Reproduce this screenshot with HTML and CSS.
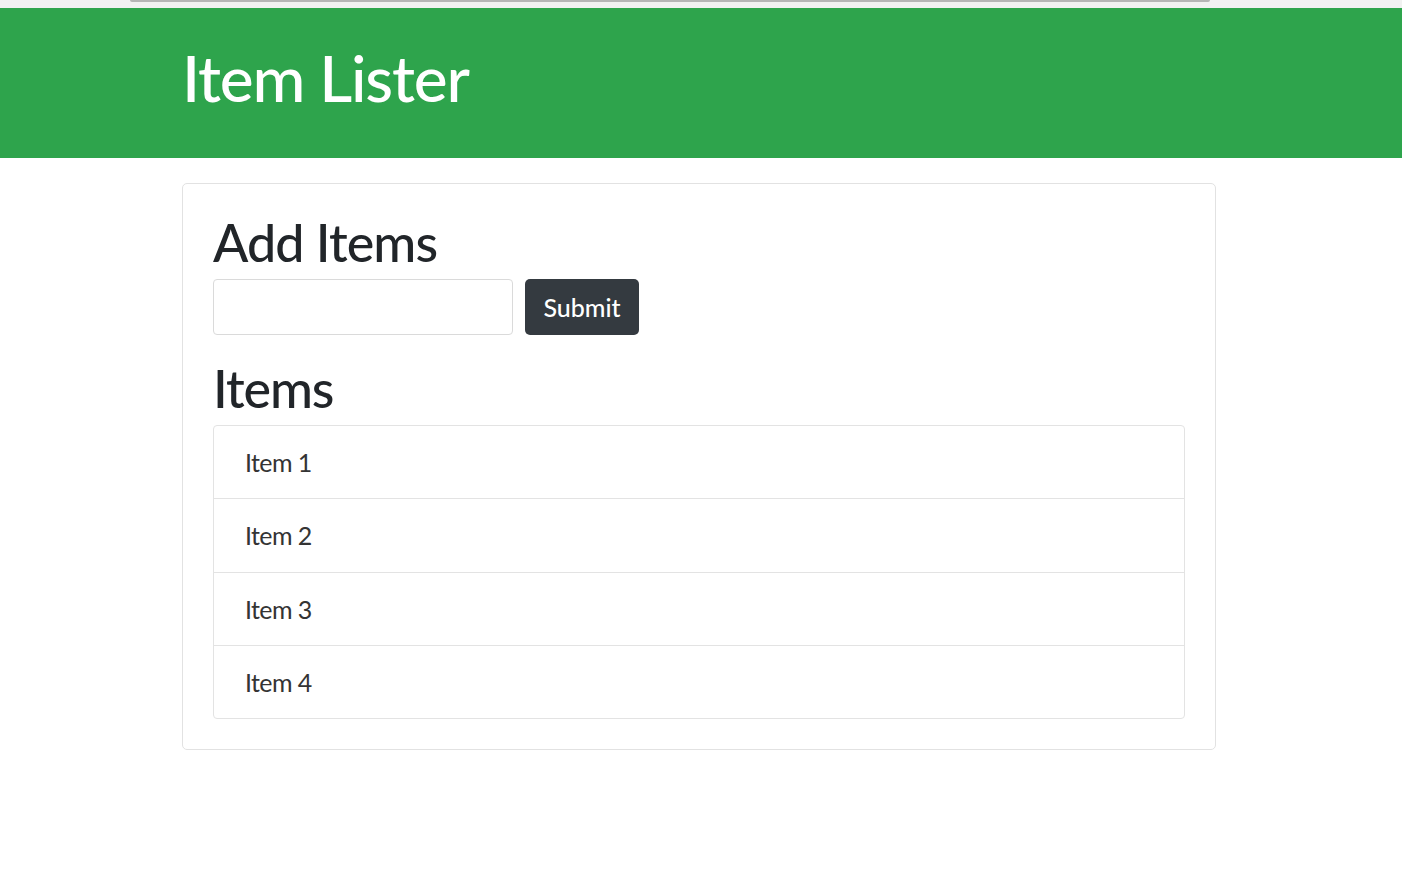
FILE: index.html
```html
<!DOCTYPE html>
<html lang="en">
<head>
<meta charset="utf-8">
<title>Item Lister</title>
<link rel="stylesheet" href="styles.css">
</head>
<body>
<div class="topstrip"><div class="topbar"></div></div>
<header class="header">
  <h1 class="title">Item Lister</h1>
</header>
<main class="container">
  <div class="card">
    <h2 class="heading">Add Items</h2>
    <form class="form">
      <input class="input" type="text">
      <button class="btn" type="button">Submit</button>
    </form>
    <h2 class="heading heading-items">Items</h2>
    <ul class="list">
      <li class="list-item">Item 1</li>
      <li class="list-item">Item 2</li>
      <li class="list-item">Item 3</li>
      <li class="list-item">Item 4</li>
    </ul>
  </div>
</main>
</body>
</html>
```

FILE: styles.css
```css
* { box-sizing: border-box; }
html, body { margin: 0; padding: 0; background: #fff; }
body { font-family: Lato, "Open Sans", sans-serif; color: #212529; }

.topstrip {
  height: 8px;
  background: #f1f1f1;
  padding-left: 130px;
  padding-right: 192px;
}
.topbar {
  height: 2px;
  background: #b5b5b5;
  border-radius: 0 0 2px 2px;
}

.header {
  height: 150px;
  background: #2ea44c;
  padding: 38px 0 0 182px;
}
.title {
  margin: 0;
  font-size: 64px;
  line-height: 64px;
  font-weight: 500;
  letter-spacing: -1.2px;
  color: #fff;
}

.container {
  padding: 25px 0 0 182px;
}
.card {
  width: 1034px;
  border: 1px solid #e2e2e2;
  border-radius: 5px;
  padding: 27px 30px 30px 30px;
}
.heading {
  margin: 0 0 6px 0;
  font-size: 52px;
  line-height: 62px;
  font-weight: 500;
  letter-spacing: -0.9px;
  color: #212529;
}
.heading-items { margin-top: 22px; letter-spacing: -1.1px; }

.form {
  display: flex;
  gap: 12px;
  margin: 0;
}
.input {
  width: 300px;
  height: 56px;
  border: 1px solid #dadada;
  border-radius: 4px;
  background: #fff;
  font: inherit;
}
.btn {
  height: 56px;
  width: 114px;
  border: none;
  border-radius: 5px;
  background: #343a40;
  color: #fff;
  font-family: inherit;
  font-size: 25px;
  font-weight: 500;
  padding: 0;
}

.list {
  list-style: none;
  margin: 0;
  padding: 0;
  width: 972px;
  border: 1px solid #e3e3e3;
  border-radius: 4px;
}
.list-item {
  box-sizing: content-box;
  display: flex;
  align-items: center;
  height: 72.25px;
  padding-left: 31px;
  font-size: 25px;
  letter-spacing: -0.6px;
  color: #343434;
}
.list-item + .list-item {
  border-top: 1px solid #e3e3e3;
}
```
